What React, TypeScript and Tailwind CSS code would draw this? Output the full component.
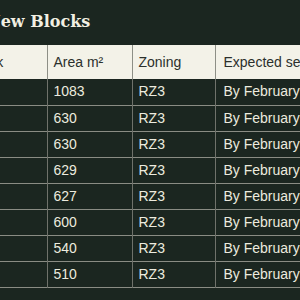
import React from 'react';

const rows = [
  { block: '1', area: '1083' },
  { block: '2', area: '630' },
  { block: '3', area: '630' },
  { block: '4', area: '629' },
  { block: '5', area: '627' },
  { block: '6', area: '600' },
  { block: '7', area: '540' },
  { block: '8', area: '510' },
];

function App() {
  return (
    <div className="w-[300px] h-[300px] overflow-hidden bg-[#1b2620]">
      <div className="-ml-[37px] w-[430px]">
        <h2
          className="pl-[23px] pt-[10px] mb-[11px] text-[16px] leading-[24px] font-bold text-[#f1efe2]"
          style={{ fontFamily: '"DejaVu Serif", serif' }}
        >
          New Blocks
        </h2>
        <table
          className="border-collapse text-[14px] text-left"
          style={{ fontFamily: '"Liberation Sans", Arial, sans-serif' }}
        >
          <thead>
            <tr className="bg-[#f3f2e8] text-[#2b302c]">
              <th className="w-[84px] h-[34px] px-[6px] font-normal border-r border-[#8d8f86]">Block</th>
              <th className="w-[85px] h-[34px] px-[6px] font-normal border-x border-[#8d8f86]">Area m²</th>
              <th className="w-[83px] h-[34px] px-[6px] font-normal border-x border-[#8d8f86]">Zoning</th>
              <th className="w-[170px] h-[34px] px-[8px] font-normal border-l border-[#8d8f86]">Expected settlement</th>
            </tr>
          </thead>
          <tbody className="text-[#ecebdf]">
            {rows.map((r) => (
              <tr key={r.block} className="border-b border-[#8a8c84]">
                <td className="h-[26px] px-[6px] border-r border-[#6f726b]"></td>
                <td className="h-[26px] px-[6px] border-x border-[#6f726b]">{r.area}</td>
                <td className="h-[26px] px-[6px] border-x border-[#6f726b]">RZ3</td>
                <td className="h-[26px] px-[8px] border-l border-[#6f726b]">By February</td>
              </tr>
            ))}
          </tbody>
        </table>
      </div>
    </div>
  );
}

export default App;
